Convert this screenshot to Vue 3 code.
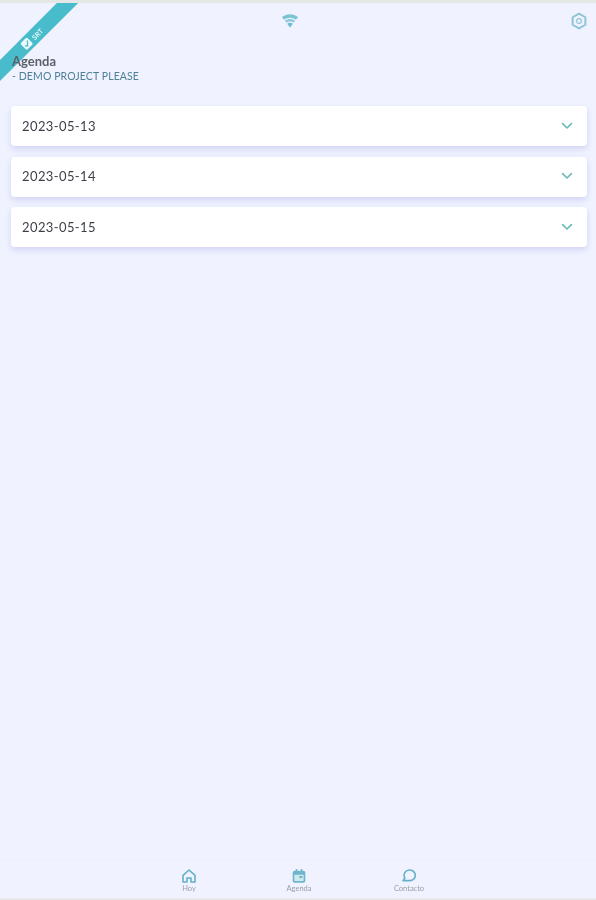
<template>
  <div class="screen">
    <div class="status-strip"></div>

    <header class="top-bar">
      <span class="top-spacer"></span>
      <svg class="wifi" viewBox="0 0 24 24" width="18" height="18">
        <path d="M12 3C8 3 4.300 4.400 1.300 6.800L4 10.400C6.200 8.700 9 7.700 12 7.700s5.800 1 8 2.700l2.700-3.600C19.700 4.400 16 3 12 3z" fill="#7cc3d6" />
        <path d="M5.200 11.500C7.100 10.100 9.400 9.200 12 9.200s4.900.9 6.800 2.300l-2 2.700C15.500 13.300 13.800 12.700 12 12.700s-3.500.6-4.800 1.500z" fill="#8dcbdc" />
        <path d="M8.300 15.600C9.300 14.800 10.600 14.300 12 14.300s2.700.5 3.700 1.300L12 21z" fill="#6dbcd1" />
      </svg>
      <svg class="gear" viewBox="0 0 24 24" width="18" height="18" fill="none" stroke="#8cc3d5" stroke-width="2.600">
        <path d="M12 2.200 20.500 7v10L12 21.800 3.500 17V7z" stroke-linejoin="round" />
        <circle cx="12" cy="12" r="3.200" stroke-width="1.500" />
      </svg>
    </header>

    <section class="intro">
      <h1>Agenda</h1>
      <p>- DEMO PROJECT PLEASE</p>
    </section>

    <main class="days">
      <div v-for="day in days" :key="day" class="day-card">
        <span>{{ day }}</span>
        <svg viewBox="0 0 14 10" width="12" height="8" fill="none" stroke="#6bb9b9" stroke-width="2">
          <path d="M1.500 2 7 7.500 12.500 2" stroke-linecap="round" stroke-linejoin="round" />
        </svg>
      </div>
    </main>

    <nav class="bottom-nav">
      <a class="nav-item">
        <svg viewBox="0 0 24 24" width="16" height="16" fill="none" stroke="#63b0c8" stroke-width="2.400" stroke-linejoin="round">
          <path d="M3 11 12 3l9 8v10h-6v-6H9v6H3z" />
        </svg>
        <span>Hoy</span>
      </a>
      <a class="nav-item">
        <svg viewBox="0 0 24 24" width="16" height="16">
          <rect x="2.500" y="4" width="19" height="18" rx="3" fill="#6fb6cc" />
          <rect x="5" y="10" width="14" height="9.500" rx="1" fill="#cfe8f0" />
          <rect x="7" y="1.500" width="2.400" height="4" fill="#6fb6cc" />
          <rect x="14.600" y="1.500" width="2.400" height="4" fill="#6fb6cc" />
          <rect x="12.500" y="12" width="4.500" height="3" fill="#6fb6cc" />
        </svg>
        <span>Agenda</span>
      </a>
      <a class="nav-item">
        <svg viewBox="0 0 24 24" width="16" height="16" fill="none" stroke="#63b0c8" stroke-width="2.400" stroke-linejoin="round">
          <path d="M13.500 3a8 8 0 0 1 5.500 13.700c-1.500 1.400-3.500 2.300-5.500 2.300H3l2.800-4A8 8 0 0 1 13.500 3z" />
        </svg>
        <span>Contacto</span>
      </a>
    </nav>

    <div class="ribbon">
      <svg viewBox="0 0 12 12" width="11" height="11">
        <rect x="1" y="1" width="10" height="10" rx="1.500" fill="#eef9fb" />
        <path d="M3 6.200 5.200 8.300 9 4" fill="none" stroke="#49bccb" stroke-width="1.400" />
      </svg>
      <span>SRT</span>
    </div>
  </div>
</template>

<script setup>
const days = ['2023-05-13', '2023-05-14', '2023-05-15']
</script>

<style>
html,
body {
  margin: 0;
  background: #f0f3ff;
}
</style>

<style scoped>
.screen {
  position: relative;
  display: flex;
  flex-direction: column;
  height: 900px;
  overflow: hidden;
  background: #f0f3ff;
  font-family: Lato, "Noto Sans", sans-serif;
  filter: blur(0.6px);
}

.status-strip {
  position: relative;
  z-index: 2;
  height: 3px;
  background: #e4e7e6;
}

.top-bar {
  display: flex;
  align-items: center;
  justify-content: space-between;
  height: 36px;
  padding: 0 8px 0 12px;
}

.top-spacer {
  width: 17px;
}

.wifi {
  margin-left: -19px;
}

.intro {
  position: relative;
  z-index: 2;
  padding: 15px 12px 0;
}

.intro h1 {
  margin: 0;
  font-size: 13px;
  line-height: 15px;
  font-weight: 700;
  color: #5b5f66;
}

.intro p {
  margin: 0;
  font-size: 10.500px;
  line-height: 15px;
  letter-spacing: 0.1px;
  color: #4d7f95;
}

.days {
  flex: 1;
  display: flex;
  flex-direction: column;
  gap: 10.500px;
  padding: 22px 9px 0 11px;
}

.day-card {
  display: flex;
  align-items: center;
  justify-content: space-between;
  height: 40px;
  padding: 0 14px 1px 11px;
  box-sizing: border-box;
  border-radius: 4px;
  background: #fff;
  box-shadow: 0 3px 6px rgba(140, 140, 215, 0.3);
  font-size: 13px;
  letter-spacing: 0.4px;
  color: #3c3f46;
}

.bottom-nav {
  display: flex;
  justify-content: center;
  height: 38px;
  border-top: 1px solid #edf0fb;
  border-bottom: 2px solid #e6e8ec;
  padding-left: 2px;
}

.nav-item {
  display: flex;
  flex-direction: column;
  align-items: center;
  justify-content: flex-end;
  width: 110px;
  padding-bottom: 5px;
  font-size: 7.500px;
  line-height: 8px;
  color: #9a9ea6;
}

.nav-item svg {
  margin-bottom: 1px;
}

.ribbon {
  position: absolute;
  top: 31px;
  left: -28.500px;
  display: flex;
  align-items: center;
  justify-content: center;
  gap: 3px;
  width: 120px;
  height: 15px;
  background: #49bccb;
  transform: rotate(-45deg);
  font-size: 7px;
  font-weight: 700;
  color: #e6f6f8;
}
</style>
